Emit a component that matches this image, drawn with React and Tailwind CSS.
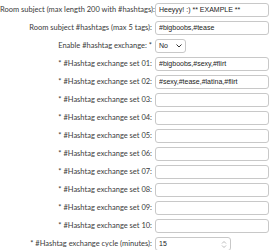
export default function App() {
  const sets = [
    "#bigboobs,#sexy,#flirt",
    "#sexy,#tease,#latina,#flirt",
    "", "", "", "", "", "", "", "",
  ];
  const label = "text-right pr-[3px] text-[#3a3a3a] whitespace-nowrap";
  const mono = { fontFamily: "'Liberation Sans', Arial, sans-serif" };
  const input =
    "h-[14px] w-full border border-[#c8c8c8] rounded-[3px] px-[3px] text-[7px] text-[#222] bg-white outline-none";
  return (
    <div
      className="w-[272px] h-[250px] bg-white pt-[3px] overflow-hidden"
      style={{ fontFamily: "Lato, 'Open Sans', sans-serif" }}
    >
      <div className="grid grid-cols-[155px_114px] auto-rows-[18px] items-start text-[7.5px] leading-[14px]">
        <div className={label}>Room subject (max length 200 with #hashtags):</div>
        <input className={input} style={mono} defaultValue="Heeyyy! :) ** EXAMPLE **" />

        <div className={label}>Room subject #hashtags (max 5 tags):</div>
        <input className={input} style={mono} defaultValue="#bigboobs,#tease" />

        <div className={label}>Enable #hashtag exchange: *</div>
        <div>
          <div className="h-[14px] w-[31px] border border-[#c8c8c8] rounded-[3px] flex items-center justify-between pl-[3px] pr-[3px] text-[7px] text-[#222]" style={mono}>
            <span>No</span>
            <svg width="6" height="4" viewBox="0 0 6 4"><path d="M0.5 0.5 L3 3 L5.5 0.5" fill="none" stroke="#333" strokeWidth="1" /></svg>
          </div>
        </div>

        {sets.map((v, i) => [
          <div key={"l" + i} className={label}>
            * #Hashtag exchange set {String(i + 1).padStart(2, "0")}:
          </div>,
          <input key={"i" + i} className={input} style={mono} defaultValue={v} />,
        ])}

        <div className={label}>* #Hashtag exchange cycle (minutes):</div>
        <div>
          <div className="h-[14px] w-[76px] border border-[#c8c8c8] rounded-[3px] flex items-center justify-between pl-[3px] pr-[3px] text-[7px] text-[#222]" style={mono}>
            <span>15</span>
            <svg width="6" height="9" viewBox="0 0 6 9"><path d="M1 3.5 L3 1.5 L5 3.5 M1 5.5 L3 7.5 L5 5.5" fill="none" stroke="#aaa" strokeWidth="0.8" /></svg>
          </div>
        </div>
      </div>
    </div>
  );
}
